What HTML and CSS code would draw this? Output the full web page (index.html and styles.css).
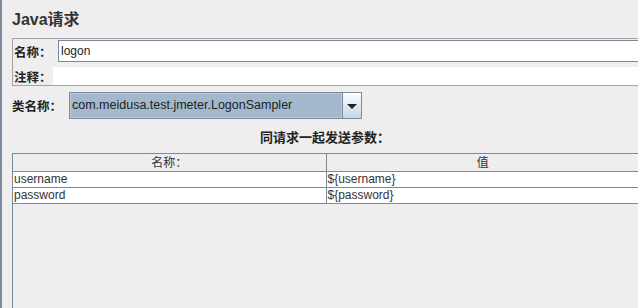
FILE: index.html
```html
<!DOCTYPE html>
<html lang="zh-CN">
<head>
    <meta charset="UTF-8">
    <title>Java请求</title>
    <link rel="stylesheet" href="styles.css">
</head>
<body>
    <div class="frame">
        <h1 class="title">Java请求</h1>

        <div class="name-panel">
            <div class="field-row">
                <span class="label">名称：</span>
                <div class="text-field">logon</div>
            </div>
            <div class="field-row comment-row">
                <span class="label">注释：</span>
                <div class="text-area"></div>
            </div>
        </div>

        <div class="class-row">
            <span class="label">类名称：</span>
            <div class="combo">
                <div class="combo-value">com.meidusa.test.jmeter.LogonSampler</div>
                <div class="combo-btn"><span class="arrow"></span></div>
            </div>
        </div>

        <div class="params-title">同请求一起发送参数：</div>

        <div class="params">
            <table class="params-table">
                <thead>
                    <tr>
                        <th>名称：</th>
                        <th>值</th>
                    </tr>
                </thead>
                <tbody>
                    <tr>
                        <td>username</td>
                        <td>${username}</td>
                    </tr>
                    <tr>
                        <td>password</td>
                        <td>${password}</td>
                    </tr>
                </tbody>
            </table>
        </div>
    </div>
</body>
</html>
```

FILE: styles.css
```css
* {
    margin: 0;
    padding: 0;
    box-sizing: border-box;
}

html, body {
    height: 100%;
    overflow: hidden;
}

body {
    background: #eeeeee;
    color: #333333;
    font-family: 'Liberation Sans', 'Noto Sans CJK SC', sans-serif;
    font-size: 12px;
}

.frame {
    border-left: 2px solid #7b8b9c;
    height: 308px;
    padding-left: 10px;
    display: flex;
    flex-direction: column;
}

.title {
    font-size: 16px;
    font-weight: bold;
    height: 38px;
    line-height: 20px;
    padding-top: 10px;
    color: #333333;
}

.label {
    font-weight: bold;
    color: #222222;
    font-family: 'Noto Sans CJK SC', sans-serif;
    font-size: 12.5px;
}

/* 名称 / 注释 */
.name-panel {
    border: 1px solid #a4a4a4;
    border-right: none;
    margin-right: -2px;
    padding-top: 1px;
    height: 48px;
}

.field-row {
    display: flex;
    align-items: center;
    height: 22px;
}

.field-row .label {
    width: 45px;
    padding-left: 1px;
}

.text-field {
    flex: 1;
    height: 22px;
    background: #ffffff;
    border: 1px solid #7a8a99;
    margin-right: 1px;
    padding-left: 2px;
    line-height: 20px;
    color: #222222;
}

.comment-row {
    margin-top: 5px;
    height: 18px;
}

.comment-row .label {
    width: 40px;
}

.text-area {
    flex: 1;
    height: 18px;
    background: #ffffff;
}

/* 类名称 */
.class-row {
    display: flex;
    align-items: center;
    margin-top: 6px;
    height: 27px;
}

.class-row .label {
    width: 57px;
}

.combo {
    display: flex;
    width: 293px;
    height: 27px;
    border: 1px solid #7a8a99;
    background: #a3b8cc;
}

.combo-value {
    flex: 1;
    border: 1px solid #b8c9d9;
    padding-left: 1px;
    line-height: 23px;
    color: #1e1e1e;
    font-size: 12.5px;
}

.combo-btn {
    width: 19px;
    border-left: 1px solid #7a8a99;
    background: linear-gradient(#ffffff, #c4d5e8);
    display: flex;
    align-items: center;
    justify-content: center;
}

.arrow {
    width: 0;
    height: 0;
    border-left: 5px solid transparent;
    border-right: 5px solid transparent;
    border-top: 5px solid #222222;
    margin-top: 1px;
}

/* 参数 */
.params-title {
    text-align: center;
    font-weight: bold;
    font-family: 'Noto Sans CJK SC', sans-serif;
    font-size: 13px;
    color: #222222;
    margin-top: 9px;
    height: 25px;
    line-height: 18px;
}

.params {
    flex: 1;
    border-left: 1px solid #7a8a99;
    border-top: 1px solid #7a8a99;
}

.params-table {
    width: 626px;
    border-collapse: collapse;
    table-layout: fixed;
}

.params-table th {
    font-weight: normal;
    height: 17px;
    line-height: 16px;
    background: #eeeeee;
    border-bottom: 1px solid #7a8a99;
    font-family: 'Noto Sans CJK SC', sans-serif;
}

.params-table th:first-child,
.params-table td:first-child {
    width: 313px;
    border-right: 1px solid #7a8a99;
}

.params-table td {
    height: 16px;
    line-height: 14px;
    background: #ffffff;
    border-bottom: 1px solid #7a8a99;
    padding-left: 1px;
    white-space: nowrap;
}
```
